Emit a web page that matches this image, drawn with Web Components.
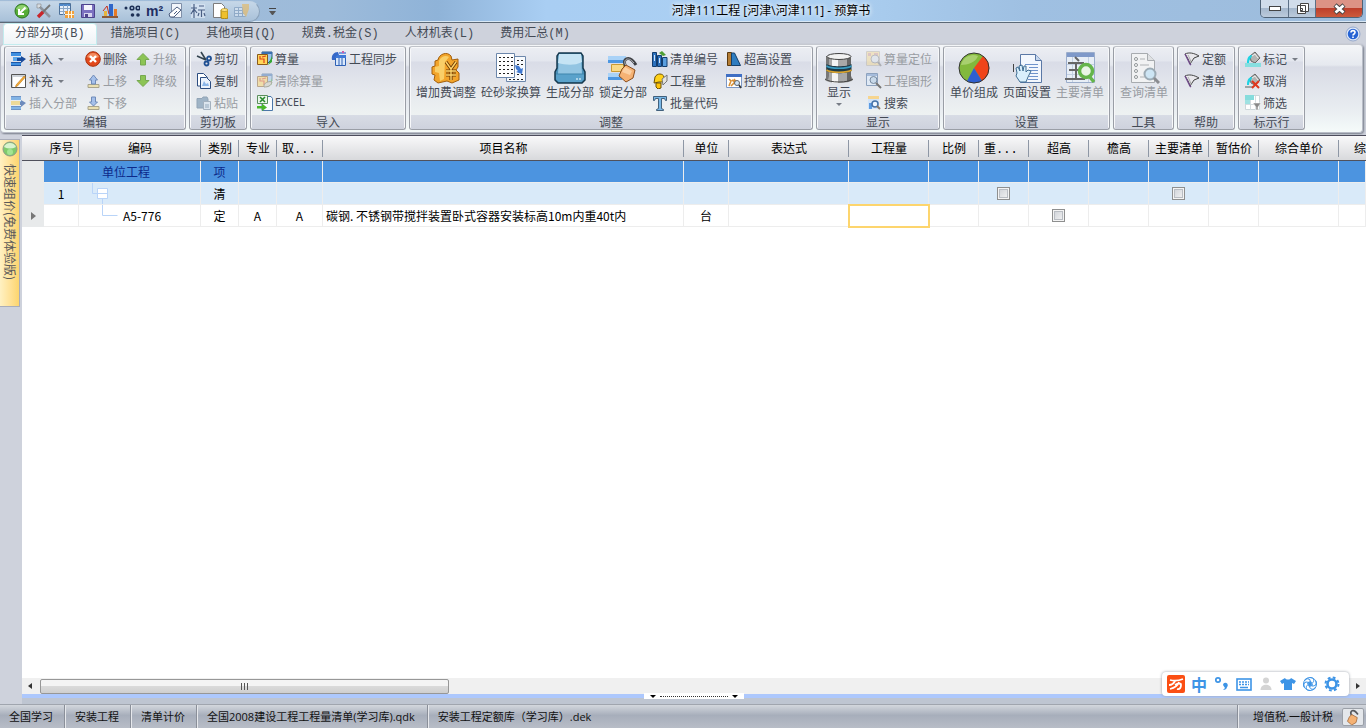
<!DOCTYPE html>
<html lang="zh-CN">
<head>
<meta charset="utf-8">
<title>河津111工程 [河津\河津111] - 预算书</title>
<style>
  html, body { height: 100%; }
  body { margin: 0; overflow: hidden; font: 12px/16px "Noto Sans CJK SC", sans-serif; color: #444a55; }
</style>
</head>
<body>
<budget-app></budget-app>
<script>
const define = (name, css, html) => {
  const tpl = document.createElement('template');
  customElements.define(name, class extends HTMLElement {
    connectedCallback() {
      if (this.shadowRoot) return;
      tpl.innerHTML = '<style>*{box-sizing:border-box}' + css + '</style>' + (typeof html === 'function' ? html(this) : html);
      this.attachShadow({ mode: 'open' }).append(tpl.content.cloneNode(true));
    }
  });
};

/* ---------- icons: [viewBox size, markup] ---------- */
const rows3 = `<path d="M0 1h10v4H0zM0 11h10v4H0z" fill="#3f8fe0"/><path d="M0 1h10v1H0zM0 14h10v1H0zM0 11h10v1H0z" fill="#1c58a8"/><path d="M2 6h9v4H2z" fill="#5aa6ea"/><path d="M15 8 10 5v2H6v3h4v2z" fill="#1a4a9a"/>`;
const bucket = `<path d="M5 5 10 1l5 6-5 5-4-2z" fill="#b4b4b2" stroke="#666"/><path d="M7 5l3-2 3 4" stroke="#eee" fill="none"/><path d="M2 12c0-4 1-8 5-8 0 3-3 4-3 8z" fill="#1ed3e3"/>`;
const calc = `<path d="M5 1h10v7l-4 4H5z" fill="#9cc6ea" stroke="#2a5a8a"/><path d="M5 1h10v2H5z" fill="#3a6fb0"/><path d="M15 5v6l-4 3z" fill="#35a832"/><path d="M.5 3.5h10v10H.5z" fill="#ffd65a" stroke="#8a5a1a"/><path d="M3 5v3h4v4M5 6l4-1" stroke="#e0401a" stroke-width="1.2" fill="none"/>`;
const ICONS = {
  insert: [16, rows3],
  insertSec: [16, `<g opacity=".6">${rows3}<path d="M0 6h9v4H0z" fill="#f0cf60"/></g>`],
  supply: [16, `<path d="M.5 1.5h14v13H.5z" fill="#fff" stroke="#555"/><path d="M1 2h13v2H1zM1 4h1v10H1z" fill="#cdd2d8"/><path d="M5 12 13 3l1.500 1L6.500 13l-2 1z" fill="#f3ab35" stroke="#b06a10" stroke-width=".5"/>`],
  del: [16, `<circle cx="8" cy="8" r="7.300" fill="#e2491b" stroke="#a8300c"/><path d="M2 6a6.500 6.500 0 0 1 12 0c-4 2-8 2-12 0z" fill="#f28a5e"/><path d="m5 5 6 6m0-6-6 6" stroke="#fff" stroke-width="2.400"/>`],
  up: [16, `<path d="M8 2.500 14 8.500h-3.500V14h-5V8.500H2z" fill="#8cc455" stroke="#76a850"/>`],
  down: [16, `<path d="M8 13.500 14 7.500h-3.500V2.500h-5v5H2z" fill="#8cc455" stroke="#76a850"/>`],
  moveUp: [16, `<path d="M3 11.500h11v3H3z" fill="#eadfb0" stroke="#a9a48c"/><path d="m8.500 2 4 5h-2v4h-4V7h-2z" fill="#a5c0ea" stroke="#6f8bb9"/>`],
  moveDown: [16, `<path d="M3 11.500h11v3H3z" fill="#eadfb0" stroke="#a9a48c"/><path d="m8.500 11 4-4h-2V2h-4v5h-2z" fill="#a5c0ea" stroke="#6f8bb9"/>`],
  cut: [16, `<path d="m1 5 9 4M5 1l5 8" stroke="#33434e" stroke-width="1.600"/><circle cx="13" cy="7.500" r="2" fill="none" stroke="#1f4f92" stroke-width="1.800"/><circle cx="10.500" cy="12.500" r="2" fill="none" stroke="#1f4f92" stroke-width="1.800"/>`],
  copy: [16, `<path d="M1.500.5h6l4 4V13h-10z" fill="#fff" stroke="#2b4c80"/><path d="M4.500 4.500h6l4 4v7h-10z" fill="#eaf2fd" stroke="#2b4c80"/><path d="M6 13h7l-1-3-2 1-2-3z" fill="#8bb6ea"/>`],
  paste: [16, `<path d="M1 3.500h5l1-1.500h4l1 2v9H1z" fill="#9fb4c6" stroke="#91a4b6"/><path d="M7.500 6.500h7v8h-7z" fill="#dbe5ee" stroke="#a3b1be"/><path d="M9 9h4v4H9z" fill="#b7c7d5"/>`],
  calc: [16, calc],
  calcClear: [16, `<g opacity=".45">${calc}</g><path d="M7 12c1-3 6-4 8-3-1 4-4 5-8 5z" fill="#d9d9d4" stroke="#a9a99f"/>`],
  excel: [16, `<path d="M5 1.500h9l1.500 2v12H5z" fill="#f8fbff" stroke="#4b77a8"/><path d="M.5.5h10v8H.5z" fill="#eaf6ea" stroke="#5a8f5c"/><path d="m3 2 5 5M8 2 3 7" stroke="#278a2c" stroke-width="1.600"/><path d="M0 11h5V8.500l5 4-5 3.500v-2.500H0z" fill="#49b82b"/>`],
  sync: [16, `<path d="M4.500 4.500h10v10h-10z" fill="#d9e8fb" stroke="#2f61b5"/><path d="M4 4h11v3H4z" fill="#3d78d8"/><path d="M8 7v8m3-8v8" stroke="#2f61b5"/><path d="M1 9C0 4 3 1 7 1l1 3C5 4 4 6 4 9z" fill="#3568c8"/><path d="M8 1h7v2H8z" fill="#7a9be0"/><path d="M11 0h2v2h-2z" fill="#cf5da8"/>`],
  coin: [32, `<path d="M8 8c1-6 9-9 13-4l1 4 6-1v8l-2 3 3 3v7l-7 3-5-2-9 2-4-3 1-5-3-1v-7l3-1V9z" fill="#f2a42a" stroke="#a35f0c"/><path d="M9 9c2-5 7-6 10-4l-4 5-1 17-4 2-1-8-4-1v-5l4-1z" fill="#f9cf68"/><path d="m16 10 5 7 5-7m-5 7v11m-5-9h10m-10 4h10" stroke="#6e3c05" stroke-width="3.200" fill="none"/><path d="m16 10 5 7 5-7m-5 7v11m-5-9h10m-10 4h10" stroke="#ffd56b" stroke-width="1.400" fill="none"/>`],
  dots: [32, `<path d="M11.500 4.500h19v25h-19z" fill="#f7fafd" stroke="#6c87ab"/><path d="M1.500 1.500h18v24h-18z" fill="#fff" stroke="#6c87ab"/><g stroke="#222" stroke-width="1" stroke-dasharray="2 2"><path d="M4 5.500h14M4 9.500h14M4 13.500h14M4 17.500h14M4 21.500h14M22 8.500h7M22 12.500h7M22 22.500h7M14 27.500h15"/></g><path d="m20 13 4 1 2 3 2-1-1 6-6-2 2-1-2-2z" fill="#3f78d0"/>`],
  build: [32, `<path d="M5 1h22l2 3v12l2 4v8l-3 3H4l-3-3v-8l2-4V4z" fill="#4a90b8" stroke="#16384e" stroke-width="1.500"/><path d="M5 2h22l1 20H4z" fill="#93c5e2"/><path d="M5 2h22l1 8C20 14 12 13 4 11z" fill="#c6e4f4"/><path d="M2 22h28v5l-3 3H5l-3-3z" fill="#5aa2cb"/><path d="M2 22h28" stroke="#3f85ad"/><path d="M22 27h2m1 0h2" stroke="#c6e4f4" stroke-width="1.500"/>`],
  lock: [32, `<path d="M1 4h18v7H1z" fill="#a9d2f7"/><path d="M1 8h18v3H1z" fill="#4d97e2"/><path d="M1 21h18v7H1z" fill="#a9d2f7"/><path d="M1 25h14v3H1z" fill="#4d97e2"/><path d="M4.500 12.500h12v7h-12z" fill="#f9d987" stroke="#c99a34"/><path d="M19 15c-5-8 3-13 10-2" stroke="#3d3f44" stroke-width="3" fill="none"/><path d="M19 14c-4-7 3-10 8-3" stroke="#b8bcc2" fill="none"/><path d="m19 13 9 5-2 8-7 4-7-6 3-7z" fill="#f5b274" stroke="#8a4d1c"/><path d="m18 15 7 4-2 4-8-3z" fill="#fbd0a3"/>`],
  books: [16, `<path d="M.5 1.500h4v14h-4z" fill="#2c71bd" stroke="#133d6e"/><path d="M5.500 4.500h4v11h-4z" fill="#2c71bd" stroke="#133d6e"/><path d="M10.500 6.500h4.500v9h-4.500z" fill="#5a9fe0" stroke="#133d6e"/><path d="M2.500 4v6M7.500 7v5" stroke="#cfe4fa"/><path d="m7 2 3-2 4 4-3 1z" fill="#4d9e34"/>`],
  helmet: [16, `<path d="M3 4c2-4 8-4 9 0v5H7l-5 1z" fill="#ffd117" stroke="#6e5200"/><path d="M10 6 15 2v6l-4 4z" fill="#e3e3e0" stroke="#777"/><path d="M4 10h5v5l-3 1-2-2z" fill="#ffc40a" stroke="#6e5200"/>`],
  tee: [16, `<path d="M1.500 1.500h13v4h-1l-1-2H9.500v10l2 1v1h-7v-1l2-1v-10h-3l-1 2h-1z" fill="#78b7e6" stroke="#35536f" stroke-width=".9"/>`],
  height: [16, `<path d="M1.500 1.500h4v13h-4z" fill="#b47d35" stroke="#5c3b10"/><path d="M5.500 2h3l6 12.500h-9z" fill="#2f7dc0" stroke="#14406c"/>`],
  check: [16, `<path d="M.5 1.500h15v13H.5z" fill="#fff" stroke="#7d98c6"/><path d="M0 1h16v3H0z" fill="#3f6fc4"/><path d="m3 6 2 2-2 5m3-6 3 2-4 4m3-7 2 3" stroke="#d98f33" stroke-width="1.600" fill="none"/><circle cx="11" cy="10" r="2.500" fill="#cfe4fb" stroke="#666"/><path d="m13 12 2 3" stroke="#333" stroke-width="1.600"/>`],
  db: [32, `<path d="M4 4h24v20l2 4c-3 4-25 4-28 0l2-4z" fill="#a8a8a8"/><path d="M9 4h6v27H9z" fill="#f4f4f4"/><path d="M24 4h4v20l1 4-5 2z" fill="#666"/><path d="M3 4h3v20l-1 4-2-1z" fill="#777"/><ellipse cx="16" cy="4.500" rx="12" ry="3" fill="#f2f2f2" stroke="#444"/><path d="M3.500 12c4 3 21 3 25 0v7c-4 3-21 3-25 0z" fill="#1f3a48"/><path d="M3.500 14c4 3 21 3 25 0" stroke="#3a9cc2" stroke-width="1.600" fill="none"/><path d="M3.500 18c4 3 21 3 25 0" stroke="#d8a22e" stroke-width="1.600" fill="none"/><path d="M2 27c4 4 24 4 28 0" stroke="#444" fill="none"/>`],
  locate: [16, `<g opacity=".45"><path d="M.5.5h13v14H.5z" fill="#f6d98c" stroke="#b7b0a0"/><path d="M2 2h3v3H2zM8 2h4v4H8z" fill="#d09a90"/><circle cx="9" cy="8" r="4" fill="#dbe2e8" stroke="#888"/><path d="m12 11 3 4" stroke="#777" stroke-width="2"/></g>`],
  shape: [16, `<path d="M.5.5h11v12H.5z" fill="#dfe9f5" stroke="#8da2be"/><path d="M1 1h10v2H1z" fill="#a6bcdb"/><circle cx="7.500" cy="7" r="3.500" fill="#c8d9ea" stroke="#77899e"/><path d="m10 10 5 5" stroke="#777" stroke-width="2"/>`],
  search: [16, `<path d="M2 1h11v13H2z" fill="#d3e4f8"/><path d="M2 1h11v3H2z" fill="#f6d590"/><path d="M3 8h3v6H3z" fill="#5b9be2"/><circle cx="9" cy="9" r="3" fill="#eef6ff" stroke="#4572a8" stroke-width="1.500"/><path d="m11 11 3 3" stroke="#8a7a6a" stroke-width="2"/>`],
  pie: [32, `<circle cx="16" cy="16" r="15" fill="#82b93c"/><path d="M16 16 25 4a15 15 0 0 1-1 25z" fill="#f0441a"/><path d="m16 16 8 13c-5 3-11 3-15 0z" fill="#2f5fd0"/><path d="M3 13C5 4 14 1 20 4 18 10 10 13 3 13z" fill="#b2d67c" opacity=".8"/><circle cx="16" cy="16" r="15" fill="none" stroke="#333"/>`],
  pageSet: [32, `<path d="M9.500 2.500h15l6 6v22h-21z" fill="#f3f7fd" stroke="#5a78a6"/><path d="M24.500 2.500v6h6" fill="#c6d7ee" stroke="#5a78a6"/><path d="M14 12.500h13M18 15.500h9M19 18.500h8M19 21.500h8M18 24.500h9M17 27.500h10" stroke="#6f93cb"/><path d="M2.500 12v8" stroke="#444"/><path d="m6 21-1-5 2-1 2 4-1-5 3-1 1 6 1-5h2v6l2-2 3 1-3 6-2 5H9l-4-6z" fill="#d9effc" stroke="#3f6d92"/>`],
  mainList: [32, `<path d="M2.500.5h28v30h-28z" fill="#e8eef6" stroke="#9badcb"/><path d="M3 1h27v4H3z" fill="#7f99c9"/><path d="M8.500 5v25M24.500 5v25M3 12.500h27M3 22.500h27" stroke="#c4d0e2"/><path d="M11 5l4 4M4 11h16M5 18h11M1 27h20M12 11v16" stroke="#666" stroke-width="2"/><circle cx="22" cy="19" r="6.500" fill="#e9f5e6" stroke="#65b54b" stroke-width="3.500"/><path d="m25 24 5 6" stroke="#65b54b" stroke-width="3.500"/>`],
  query: [32, `<path d="M3.500 1.500h16l7 7v22h-23z" fill="#f1f2f3" stroke="#a7abaf"/><path d="M19.500 1.500v7h7" fill="#dfe1e3" stroke="#a7abaf"/><g fill="#fff" stroke="#8f9497"><circle cx="8" cy="7" r="1.500"/><circle cx="8" cy="13" r="1.500"/><circle cx="8" cy="19" r="1.500"/><circle cx="8" cy="25" r="1.500"/></g><path d="M12 13h9M12 7h5M12 25h5" stroke="#c5c8ca" stroke-width="1.500"/><circle cx="22" cy="22" r="5.500" fill="#cde5f4" stroke="#9cabb5" stroke-width="2"/><path d="m26 26 5 5" stroke="#8a8c90" stroke-width="3"/>`],
  fan: [16, `<path d="M1 3c4-2 9-1 14 2l-5 2-4 6C5 9 3 6 1 3z" fill="#e9e8ec" stroke="#444"/><path d="m1 3 5 10 1 1" stroke="#704a8a" stroke-width="1.300" fill="none"/><path d="M4 4c1 2 2 4 3 7" stroke="#aaa" fill="none"/>`],
  mark: [16, bucket + `<path d="M0 12h16v4H0z" fill="#86dfe0"/>`],
  unmark: [16, bucket + `<path d="M0 13h8v2H0z" fill="#9fa5a5"/><path d="m7 8 7 7m0-7-7 7" stroke="#e0371c" stroke-width="2"/>`],
  filter: [16, `<path d="M.5.5h14v14H.5z" fill="#fff" stroke="#ccd6d9"/><path d="M0 0h9v5H0z" fill="#86dcdc"/><path d="M0 5h5v4H0z" fill="#9fe2e2"/><path d="M5.500 5v10M10.500 1v14M1 9.500h14" stroke="#d3dcdf"/><path d="M8 8h8l-3 4v3h-2v-3z" fill="#888" stroke="#fff" stroke-width=".5"/>`],
  /* quick access bar */
  qBack: [16, `<circle cx="8" cy="8" r="7" fill="#56ad37" stroke="#2c7421"/><path d="M2 6a6.500 6.500 0 0 1 12 0c-4 2-8 2-12 0z" fill="#8ed06e"/><path d="M11.500 4.500 6 10M5 6v5h5" stroke="#fff" stroke-width="2" fill="none"/>`],
  qTools: [16, `<path d="m2 2 12 12" stroke="#8d949d" stroke-width="2.500"/><path d="M14 2 6 10" stroke="#777" stroke-width="1.800"/><path d="m7 9-5 5" stroke="#c8262b" stroke-width="3.400"/><path d="M1 1h4v2L3 5H1z" fill="#d8dde2" stroke="#777" stroke-width=".5"/>`],
  qTable: [16, `<path d="M1.500.5h11v11h-11z" fill="#e8f0fa" stroke="#4c7099"/><path d="M1 1h11v2H1z" fill="#4f88c9"/><path d="M2 5.500h10M2 8.500h10M5.500 2v10M9.500 2v10" stroke="#8ba8c8"/><path d="M7 8h9v7H7z" fill="#f0a03c"/><path d="M7 11.500h9M10.500 8v7M13.500 8v7" stroke="#fff5dd"/>`],
  qSave: [16, `<path d="M1.500 1.500h13v13h-13z" fill="#7b70c0" stroke="#4d438c"/><path d="M4 2h8v5H4z" fill="#f4f4fb"/><path d="M4 10h8v4H4z" fill="#d7d4ee"/><path d="M5 11h3v3H5z" fill="#4d438c"/>`],
  qChart: [16, `<path d="M0 13h16v2H0z" fill="#8a5a3c"/><path d="M2 8h3v5H2z" fill="#e8b43c"/><path d="M7 1h4v12H7z" fill="#2f66c8"/><path d="M12 6h3v7h-3z" fill="#e87a24"/><path d="m1 8 4-5 2 8" stroke="#c92f1b" fill="none"/>`],
  qDots: [16, `<g fill="#1e3156"><circle cx="2" cy="5" r="1.500"/><circle cx="8" cy="5" r="2.600"/><circle cx="14" cy="5" r="2.600"/><circle cx="8.500" cy="12" r="1.800"/><circle cx="14" cy="12" r="1.800"/></g><circle cx="8" cy="5" r="1" fill="#b8cfe8"/><circle cx="14" cy="5" r="1" fill="#b8cfe8"/>`],
  qNote: [16, `<path d="M3.500.5h10v14h-10z" fill="#f2f5fa" stroke="#7f8fa8"/><path d="M1 11 9 4l4 3-7 7H2z" fill="#fff" stroke="#4c5e80"/><path d="m6 11 3-3" stroke="#4c5e80"/>`],
  qStd: [16, `<path d="M1 1h14v14H1z" fill="#d7e3f2" opacity=".8"/><path d="M1 5h6M4 1v14M4 6l-3 5m3-5 3 4M9 3h5M8 7h7M11.500 7v7M9 10l-1 3m6-3 1 3" stroke="#4a5f84" stroke-width="1.200" fill="none"/>`],
  qDoc: [16, `<path d="M1.500.5h8l3 3v11h-11z" fill="#fff" stroke="#7c7c7c"/><path d="M9 7h7v8c-2 1-5 1-7 0z" fill="#eec02c" stroke="#a5800b"/><ellipse cx="12.500" cy="7" rx="3.500" ry="1.500" fill="#ffe27a" stroke="#a5800b" stroke-width=".6"/>`],
  qExport: [16, `<g opacity=".6"><path d="M.5 4.500h11v9H.5z" fill="#dce8f5" stroke="#7795b8"/><path d="M1 7.500h10M1 10.500h10M4.500 5v8M8.500 5v8" stroke="#7795b8"/><path d="M8 1h7v5l-3 8-3-4z" fill="#e8b75a"/></g>`],
  help: [16, `<circle cx="8" cy="8" r="6" fill="#2663d4" stroke="#dde7f7" stroke-width="1.500"/><circle cx="8" cy="8" r="7" fill="none" stroke="#7c96c4" stroke-width=".7"/><path d="M6 6.500c0-2.500 4-2.500 4 0 0 1.500-2 1.500-2 3M8 10.500v1.500" stroke="#fff" stroke-width="1.600" fill="none"/>`],
  ball: [16, `<circle cx="8" cy="8" r="7" fill="#7fcb6c" stroke="#8d9a8a"/><path d="M2 6a6.500 6.500 0 0 1 12 0c-4 2-8 2-12 0z" fill="#d8f3cf"/><circle cx="8" cy="11" r="3" fill="#a4e492"/>`],
  /* input method bar */
  imeLogo: [20, `<rect x="1" y="1" width="18" height="18" rx="2" fill="#fb4f14"/><path d="M4 6c4 1 8 1 13-1M3 11c4 0 5-2 6-4M4 15c4-1 8-4 9-7M9 11c3-2 6-2 6 0s-1 5-4 4" stroke="#fff" stroke-width="1.800" fill="none"/>`],
  imePunct: [20, `<circle cx="6" cy="6" r="2.200" fill="none" stroke="#3d94e6" stroke-width="1.700"/><path d="M11 11a2.400 2.400 0 1 1 4 2c0 2-2 3-4 3l2-2z" fill="#3d94e6"/>`],
  imeKeys: [20, `<rect x="3" y="5" width="14" height="11" fill="#fff" stroke="#3d94e6" stroke-width="1.600"/><path d="M5 8h10M5 10.500h10" stroke="#3d94e6" stroke-width="1.500" stroke-dasharray="2 1"/><path d="M6 13.500h8" stroke="#3d94e6" stroke-width="1.500"/>`],
  imeUser: [20, `<circle cx="10" cy="6.500" r="3" fill="#d4d4d4"/><path d="M4.500 16c0-7 11-7 11 0z" fill="#d4d4d4"/>`],
  imeShirt: [20, `<path d="M7 4c1 2 5 2 6 0l5 3-2 3-2-1v7H6V9l-2 1-2-3z" fill="#3d94e6"/>`],
  imeSwirl: [20, `<g fill="none" stroke="#3d94e6"><circle cx="10" cy="10" r="6.500"/><path id="s" d="M10 3.500c4 0 5 4 2 6l-4 2.500"/><path d="M10 3.500c4 0 5 4 2 6l-4 2.500" transform="rotate(60 10 10)"/><path d="M10 3.500c4 0 5 4 2 6l-4 2.500" transform="rotate(120 10 10)"/><path d="M10 3.500c4 0 5 4 2 6l-4 2.500" transform="rotate(180 10 10)"/><path d="M10 3.500c4 0 5 4 2 6l-4 2.500" transform="rotate(240 10 10)"/><path d="M10 3.500c4 0 5 4 2 6l-4 2.500" transform="rotate(300 10 10)"/></g>`],
  imeGear: [20, `<circle cx="10" cy="10" r="4.500" fill="none" stroke="#3d94e6" stroke-width="2.600"/><circle cx="10" cy="10" r="6.500" fill="none" stroke="#3d94e6" stroke-width="2" stroke-dasharray="2.800 2.300"/>`]
};
define('ui-icon', ':host{display:block;flex:none}svg{display:block}', el => {
  const [box, body] = ICONS[el.getAttribute('name')];
  return `<svg width="${box}" height="${box}" viewBox="0 0 ${box} ${box}" fill="none" aria-hidden="true">${body}</svg>`;
});

/* ---------- ribbon ---------- */
define('tool-button', `
  :host{display:block}
  button{display:flex;align-items:center;gap:2px;height:22px;padding:0;border:0;background:none;font:inherit;color:#444a55;white-space:nowrap}
  button:disabled{color:#989ca2}
  :host([big]) button{flex-direction:column;height:auto;gap:0;padding-top:4px;line-height:16px}
  i{border:3px solid transparent;border-top-color:#777c85;border-bottom:0;margin-left:3px}
  :host([big]) i{margin:3px 0 0}`,
  el => `<button type="button" ${el.hasAttribute('off') ? 'disabled' : ''}><ui-icon name="${el.getAttribute('icon')}"></ui-icon><span><slot></slot></span>${el.hasAttribute('menu') ? '<i></i>' : ''}</button>`);

define('ribbon-group', `
  :host{display:block;flex:none}
  section{display:flex;flex-direction:column;height:84px;border:1px solid #9a9ea6;border-top-color:#c0c3c9;border-radius:3px;box-shadow:inset 0 0 0 1px #f7f8fa;background:linear-gradient(#eceef3 0,#e3e6ee 14px,#d9dce7 15px,#e4e7ed 40px,#eef2f2 68px)}
  .body{display:flex;gap:5px;height:68px;padding:1px 6px 0}
  h2{margin:0 1px;height:14px;font:inherit;line-height:14px;text-align:center;background:linear-gradient(#d8dce5,#ced2dd)}`,
  el => `<section><div class="body"><slot></slot></div><h2>${el.getAttribute('label')}</h2></section>`);

define('tool-column', `:host{display:grid;grid-template-rows:repeat(3,22px);align-content:start}`, '<slot></slot>');

define('app-ribbon', `
  :host{display:block;background:#ced2dc}
  nav{display:flex;align-items:flex-end;gap:4px;height:21px;padding:1px 5px 0 4px}
  nav a{height:20px;padding:0 11px;font-family:"Liberation Mono","Noto Sans CJK SC",monospace;line-height:20px;color:#444a55;text-decoration:none;border-radius:3px 3px 0 0}
  nav a.on{background:linear-gradient(#fff,#eef3f6);box-shadow:0 0 0 1px #c3ecee}
  nav ui-icon{margin:0 0 2px auto}
  .strip{display:flex;gap:3px;margin:0 3px 0 0;padding:1px 3px 2px;border:1px solid #b9bdc7;border-top-color:#c6c9d0;border-radius:4px;background:linear-gradient(#f4f6f8,#e6e9ef 20px,#d8dbe5 22px,#e9edf1 65px,#f5fbfa);box-shadow:1px 1px 2px #777d8a}
  .edit{width:182px}.clip{width:58px}.import{width:156px}.adjust{width:404px}.show{width:124px}.set{width:167px}.tool{width:61px}.assist{width:58px}.marks{width:67px}
  .wide{width:69px}.col{width:45px}.code{width:69px}.gapL{margin-left:2px}
  .latin{font-family:"DejaVu Sans Mono",monospace;font-size:10px}
  .show tool-button[big]{width:36px}`, `
  <nav>
    <a class="on" href="#b">分部分项(B)</a><a href="#c">措施项目(C)</a><a href="#q">其他项目(Q)</a><a href="#s">规费.税金(S)</a><a href="#l">人材机表(L)</a><a href="#m">费用汇总(M)</a>
    <ui-icon name="help"></ui-icon>
  </nav>
  <div class="strip">
    <ribbon-group class="edit" label="编辑">
      <tool-column class="wide"><tool-button icon="insert" menu>插入</tool-button><tool-button icon="supply" menu>补充</tool-button><tool-button icon="insertSec" off>插入分部</tool-button></tool-column>
      <tool-column class="col"><tool-button icon="del">删除</tool-button><tool-button icon="moveUp" off>上移</tool-button><tool-button icon="moveDown" off>下移</tool-button></tool-column>
      <tool-column><tool-button icon="up" off>升级</tool-button><tool-button icon="down" off>降级</tool-button></tool-column>
    </ribbon-group>
    <ribbon-group class="clip" label="剪切板">
      <tool-column><tool-button icon="cut">剪切</tool-button><tool-button icon="copy">复制</tool-button><tool-button icon="paste" off>粘贴</tool-button></tool-column>
    </ribbon-group>
    <ribbon-group class="import" label="导入">
      <tool-column class="wide"><tool-button icon="calc">算量</tool-button><tool-button icon="calcClear" off>清除算量</tool-button><tool-button icon="excel" class="latin">EXCEL</tool-button></tool-column>
      <tool-column><tool-button icon="sync">工程同步</tool-button></tool-column>
    </ribbon-group>
    <ribbon-group class="adjust" label="调整">
      <tool-button big icon="coin">增加费调整</tool-button><tool-button big icon="dots">砼砂浆换算</tool-button><tool-button big icon="build">生成分部</tool-button><tool-button big icon="lock">锁定分部</tool-button>
      <tool-column class="code"><tool-button icon="books">清单编号</tool-button><tool-button icon="helmet">工程量</tool-button><tool-button icon="tee">批量代码</tool-button></tool-column>
      <tool-column><tool-button icon="height">超高设置</tool-button><tool-button icon="check">控制价检查</tool-button></tool-column>
    </ribbon-group>
    <ribbon-group class="show" label="显示">
      <tool-button big menu icon="db">显示</tool-button>
      <tool-column class="gapL"><tool-button icon="locate" off>算量定位</tool-button><tool-button icon="shape" off>工程图形</tool-button><tool-button icon="search">搜索</tool-button></tool-column>
    </ribbon-group>
    <ribbon-group class="set" label="设置">
      <tool-button big icon="pie">单价组成</tool-button><tool-button big icon="pageSet">页面设置</tool-button><tool-button big icon="mainList" off>主要清单</tool-button>
    </ribbon-group>
    <ribbon-group class="tool" label="工具"><tool-button big icon="query" off>查询清单</tool-button></ribbon-group>
    <ribbon-group class="assist" label="帮助">
      <tool-column><tool-button icon="fan">定额</tool-button><tool-button icon="fan">清单</tool-button></tool-column>
    </ribbon-group>
    <ribbon-group class="marks" label="标示行">
      <tool-column><tool-button icon="mark" menu>标记</tool-button><tool-button icon="unmark">取消</tool-button><tool-button icon="filter">筛选</tool-button></tool-column>
    </ribbon-group>
  </div>`);

/* ---------- title bar ---------- */
define('title-bar', `
  :host{display:grid;grid-template-columns:1fr auto 1fr;height:23px;border-bottom:1px solid #5b6875;box-shadow:inset 0 -1px #d9e8f5;background:linear-gradient(90deg,#a3bdd8,#9dbbda 24%,#8fb3d8 32%,#a9cef3 40%,#acd0f2 60%,#9fc0e2 75%,#9dbcdc)}
  .quick{display:flex;align-items:center;gap:6px;justify-self:start;height:21px;padding:0 9px 0 14px;border:1px solid #8ba2ba;border-left:0;border-top-color:#c3d4e5;border-radius:0 11px 11px 0;background:linear-gradient(#c5d7e8,#a9c1d9)}
  .quick span{font:bold 14px/16px "Liberation Sans",sans-serif;color:#1f2f63;width:16px;white-space:nowrap}
  .left{display:flex;align-items:center;gap:9px}
  .more{width:7px;border-top:1px solid #444;padding-top:2px}.more i{display:block;border:3px solid transparent;border-top:4px solid #555;border-bottom:0}
  h1{margin:0;font:12px/21px "Open Sans","Noto Sans CJK SC",sans-serif;color:#000;text-shadow:0 0 5px #fff,0 0 5px #fff;padding-left:176px}
  .win{display:flex;justify-self:end;height:18px;margin-right:3px;border:1px solid #4f6276;border-top:0;border-radius:0 0 5px 5px;overflow:hidden}
  .win button{display:grid;place-items:center;width:28px;height:17px;padding:0;border:0;border-right:1px solid #5c7086;background:linear-gradient(#d0dcea 45%,#a5b8cd 50%,#bccbdc)}
  .win button:nth-child(2){width:27px}
  .win .x{width:46px;border:0;background:linear-gradient(#dc9386 45%,#bd3f2c 50%,#cc5a3c)}`, `
  <div class="left"><div class="quick">
    <ui-icon name="qBack"></ui-icon><ui-icon name="qTools"></ui-icon><ui-icon name="qTable"></ui-icon><ui-icon name="qSave"></ui-icon><ui-icon name="qChart"></ui-icon><ui-icon name="qDots"></ui-icon><span>m²</span><ui-icon name="qNote"></ui-icon><ui-icon name="qStd"></ui-icon><ui-icon name="qDoc"></ui-icon><ui-icon name="qExport"></ui-icon>
  </div><div class="more"><i></i></div></div>
  <h1>河津111工程 [河津\\河津111] - 预算书</h1>
  <div class="win">
    <button type="button" aria-label="最小化"><svg width="12" height="5"><rect x=".5" y=".5" width="11" height="4" fill="#fff" stroke="#444"/></svg></button>
    <button type="button" aria-label="还原"><svg width="13" height="13" fill="#fff" stroke="#444"><path d="M4.500 1.500h8v8h-8zM1.500 3.500h8v8h-8zM4.500 6.500h2v2h-2z"/></svg></button>
    <button type="button" class="x" aria-label="关闭"><svg width="13" height="12"><path d="m2 2 9 8m0-8-9 8" stroke="#444" stroke-width="4.500"/><path d="m2.500 2.500 8 7m0-7-8 7" stroke="#fff" stroke-width="2.800"/></svg></button>
  </div>`);

/* ---------- bill grid ---------- */
const COLS = [['', 22], ['序号', 35], ['编码', 122], ['类别', 38], ['专业', 38], ['取...', 46], ['项目名称', 361], ['单位', 45], ['表达式', 120], ['工程量', 80], ['比例', 50], ['重...', 50], ['超高', 60], ['檐高', 60], ['主要清单', 60], ['暂估价', 50], ['综合单价', 80], ['综', 0]];
const box = l => `<input type="checkbox" aria-label="${l}">`;
const line = (cls, cells) => `<tr class="${cls}">` + COLS.map((c, i) => `<td class="c${i}">${cells[i] || ''}</td>`).join('') + '</tr>';
define('bill-grid', `
  :host{display:block;flex:1;min-height:0;overflow:hidden;background:#fff;border-top:1px solid #4d4d5c}
  table{width:100%;table-layout:fixed;border-collapse:separate;border-spacing:0;color:#000}
  th,td{padding:0;font-weight:400;text-align:center;white-space:nowrap;overflow:hidden}
  th{height:25px;padding-top:2px;border-bottom:1px solid #50515c;line-height:20px;vertical-align:baseline;background:linear-gradient(#8e97a5,#8e97a5) right 4px/1px 17px no-repeat,linear-gradient(#f9f9fa,#d8d9dc)}
  th.h0,th.h17{background:linear-gradient(#f9f9fa,#d8d9dc)}
  th.h5,th.h11{text-align:left;padding-left:5px;font-family:"Liberation Mono","Noto Sans CJK SC",monospace}
  th.h17{text-align:left;padding-left:15px}
  td{height:22px;line-height:21px;border-right:1px solid #ededed;border-bottom:1px solid #ededed}
  td.c0{background:#e8eaeb;border-color:#e8eaeb}
  .top td:not(.c0){background:#4c94e0;color:#0d2a8a}
  .top .c2{text-align:left;padding-left:23px}
  .sum td:not(.c0){background:#d9eaf9}
  .c2 div{display:flex}.c2 svg{display:block;flex:none;margin-right:5px}
  .c6{text-align:left;padding-left:3px}
  .item .c9{outline:2px solid #fdd56d;outline-offset:-1px}
  .c0 i{display:block;width:0;margin-left:9px;border:4px solid transparent;border-left:5px solid #777;border-right:0}
  input{display:block;appearance:none;width:13px;height:13px;margin:0 auto;border:1px solid #8e8f8f;background:linear-gradient(135deg,#cbcfd5,#f6f6f6);box-shadow:inset 0 0 0 1px #f4f4f4,inset 0 0 0 2px #b9bdc3}`,
  () => `<table><colgroup>${COLS.map(c => `<col${c[1] ? ` style="width:${c[1]}px"` : ''}>`).join('')}</colgroup>
  <thead><tr>${COLS.map((c, i) => `<th class="h${i}">${c[0]}</th>`).join('')}</tr></thead><tbody>
  ${line('top', { 2: '单位工程', 3: '项' })}
  ${line('sum', { 1: '1', 2: '<div><svg width="40" height="21" fill="none" stroke="#b9d4f8"><path d="M13.500 0v10.500h5M18.500 5.500h10v10h-10zM18 10.500h11M23.500 16v5"/><path d="M19 6h9v4h-9zM19 11h9v4h-9z" fill="#fff" stroke="none"/></svg></div>', 3: '清', 11: box('重'), 14: box('主要清单') })}
  ${line('item', { 0: '<i></i>', 2: '<div><svg width="39" height="21" fill="none" stroke="#b9d4f8"><path d="M23.500 0v10.500h15"/></svg>A5-776</div>', 3: '定', 4: 'A', 5: 'A', 6: '碳钢. 不锈钢带搅拌装置卧式容器安装标高10m内重40t内', 7: '台', 12: box('超高') })}
  </tbody></table>`);

define('side-tab', `
  :host{display:block;width:22px;flex:none;padding-top:4px;background:#ced2dc}
  button{display:flex;flex-direction:column;align-items:center;gap:7px;width:20px;height:168px;padding:1px 0 0;border:1px solid #a9adb9;border-left:0;background:linear-gradient(90deg,#fff1c2,#ffe092 60%,#fdd56d);color:#5a5a5a;font:inherit}
  span{writing-mode:vertical-rl;text-orientation:sideways;line-height:16px;white-space:nowrap}`,
  '<button type="button"><ui-icon name="ball"></ui-icon><span>快速组价(免费体验版)</span></button>');

define('scroll-strip', `
  :host{display:block;flex:none}
  .bar{display:flex;align-items:center;height:16px;background:#f0f0f0;padding:0 6px 0 6px}
  .l,.r{border:3px solid transparent}.l{border-right:4px solid #333;border-left:0}.r{border-left:4px solid #333;border-right:0;margin-left:auto}
  .thumb{display:flex;justify-content:center;align-items:center;gap:2px;width:409px;height:15px;margin-left:8px;border:1px solid #979797;border-radius:2px;background:linear-gradient(#f4f4f4 45%,#dadada 50%,#cfcfcf)}
  .thumb b{width:1px;height:7px;background:#555}
  .split{display:flex;justify-content:center;height:10px;border-top:4px solid #adc8fd;background:#bec5d1}
  .grip{display:flex;align-items:center;justify-content:space-between;width:100px;height:6px;margin-top:-5px;padding:0 6px;background:#fff}
  .grip i{border:3px solid transparent;border-top-color:#000;border-bottom:0}.grip u{flex:1;margin:0 4px;border-top:1px dotted #333}`, `
  <div class="bar"><i class="l"></i><div class="thumb"><b></b><b></b><b></b></div><i class="r"></i></div>
  <div class="split"><div class="grip"><i></i><u></u><i></i></div></div>`);

define('status-bar', `
  :host{display:flex;flex:none;height:24px;font:11px/23px "Open Sans","Noto Sans CJK SC",sans-serif;color:#111;border-top:1px solid #a0a5ae;background:linear-gradient(#d3d7dd,#a7aebb 45%,#b8bdc7)}
  span{padding:0 11px 0 9px;border-right:1px solid #8a8f99;box-shadow:1px 0 #e6e8ec;white-space:nowrap}
  span+span{padding-left:10px}
  .long{padding-right:12px}
  .last{border:0;box-shadow:none}
  .tax{display:flex;align-items:center;margin-left:auto;padding:0 2px 0 15px;gap:9px;border-left:1px solid #8a8f99;box-shadow:inset 1px 0 #e6e8ec}
  button{width:22px;height:18px;padding:0 2px;border:1px solid #9ba0a8;border-radius:2px;background:#e4e7eb}
  svg{display:block}`, `
  <span>全国学习</span><span>安装工程</span><span>清单计价</span><span class="long">全国2008建设工程工程量清单(学习库).qdk</span><span class="last">安装工程定额库（学习库）.dek</span>
  <div class="tax">增值税.一般计税<button type="button" aria-label="锁定"><svg width="16" height="16" viewBox="10 4 22 26" fill="none"><path d="M19 15c-5-8 3-13 10-2" stroke="#55585e" stroke-width="2.800"/><path d="m19 13 9 5-2 8-7 4-7-6 3-7z" fill="#f5b274" stroke="#8a4d1c"/></svg></button></div>`);

define('ime-bar', `
  :host{position:absolute;right:17px;bottom:32px;display:flex;align-items:center;gap:2px;height:24px;padding:0 7px 0 4px;border-radius:4px;background:#fff;box-shadow:0 0 3px #9aa0aa}
  b{width:20px;margin:0 1px;text-align:center;font:bold 16px/20px "Noto Sans CJK SC",sans-serif;color:#3d94e6}`, `
  <ui-icon name="imeLogo"></ui-icon><b>中</b><ui-icon name="imePunct"></ui-icon><ui-icon name="imeKeys"></ui-icon><ui-icon name="imeUser"></ui-icon><ui-icon name="imeShirt"></ui-icon><ui-icon name="imeSwirl"></ui-icon><ui-icon name="imeGear"></ui-icon>`);

define('budget-app', `
  :host{display:flex;flex-direction:column;height:100vh;position:relative;background:#ced2dc}
  main{display:flex;flex:1;min-height:0;margin-top:2px}
  .work{display:flex;flex-direction:column;flex:1;min-width:0}`, `
  <title-bar></title-bar><app-ribbon></app-ribbon>
  <main><side-tab></side-tab><div class="work"><bill-grid></bill-grid><scroll-strip></scroll-strip></div></main>
  <status-bar></status-bar><ime-bar></ime-bar>`);
</script>
</body>
</html>
